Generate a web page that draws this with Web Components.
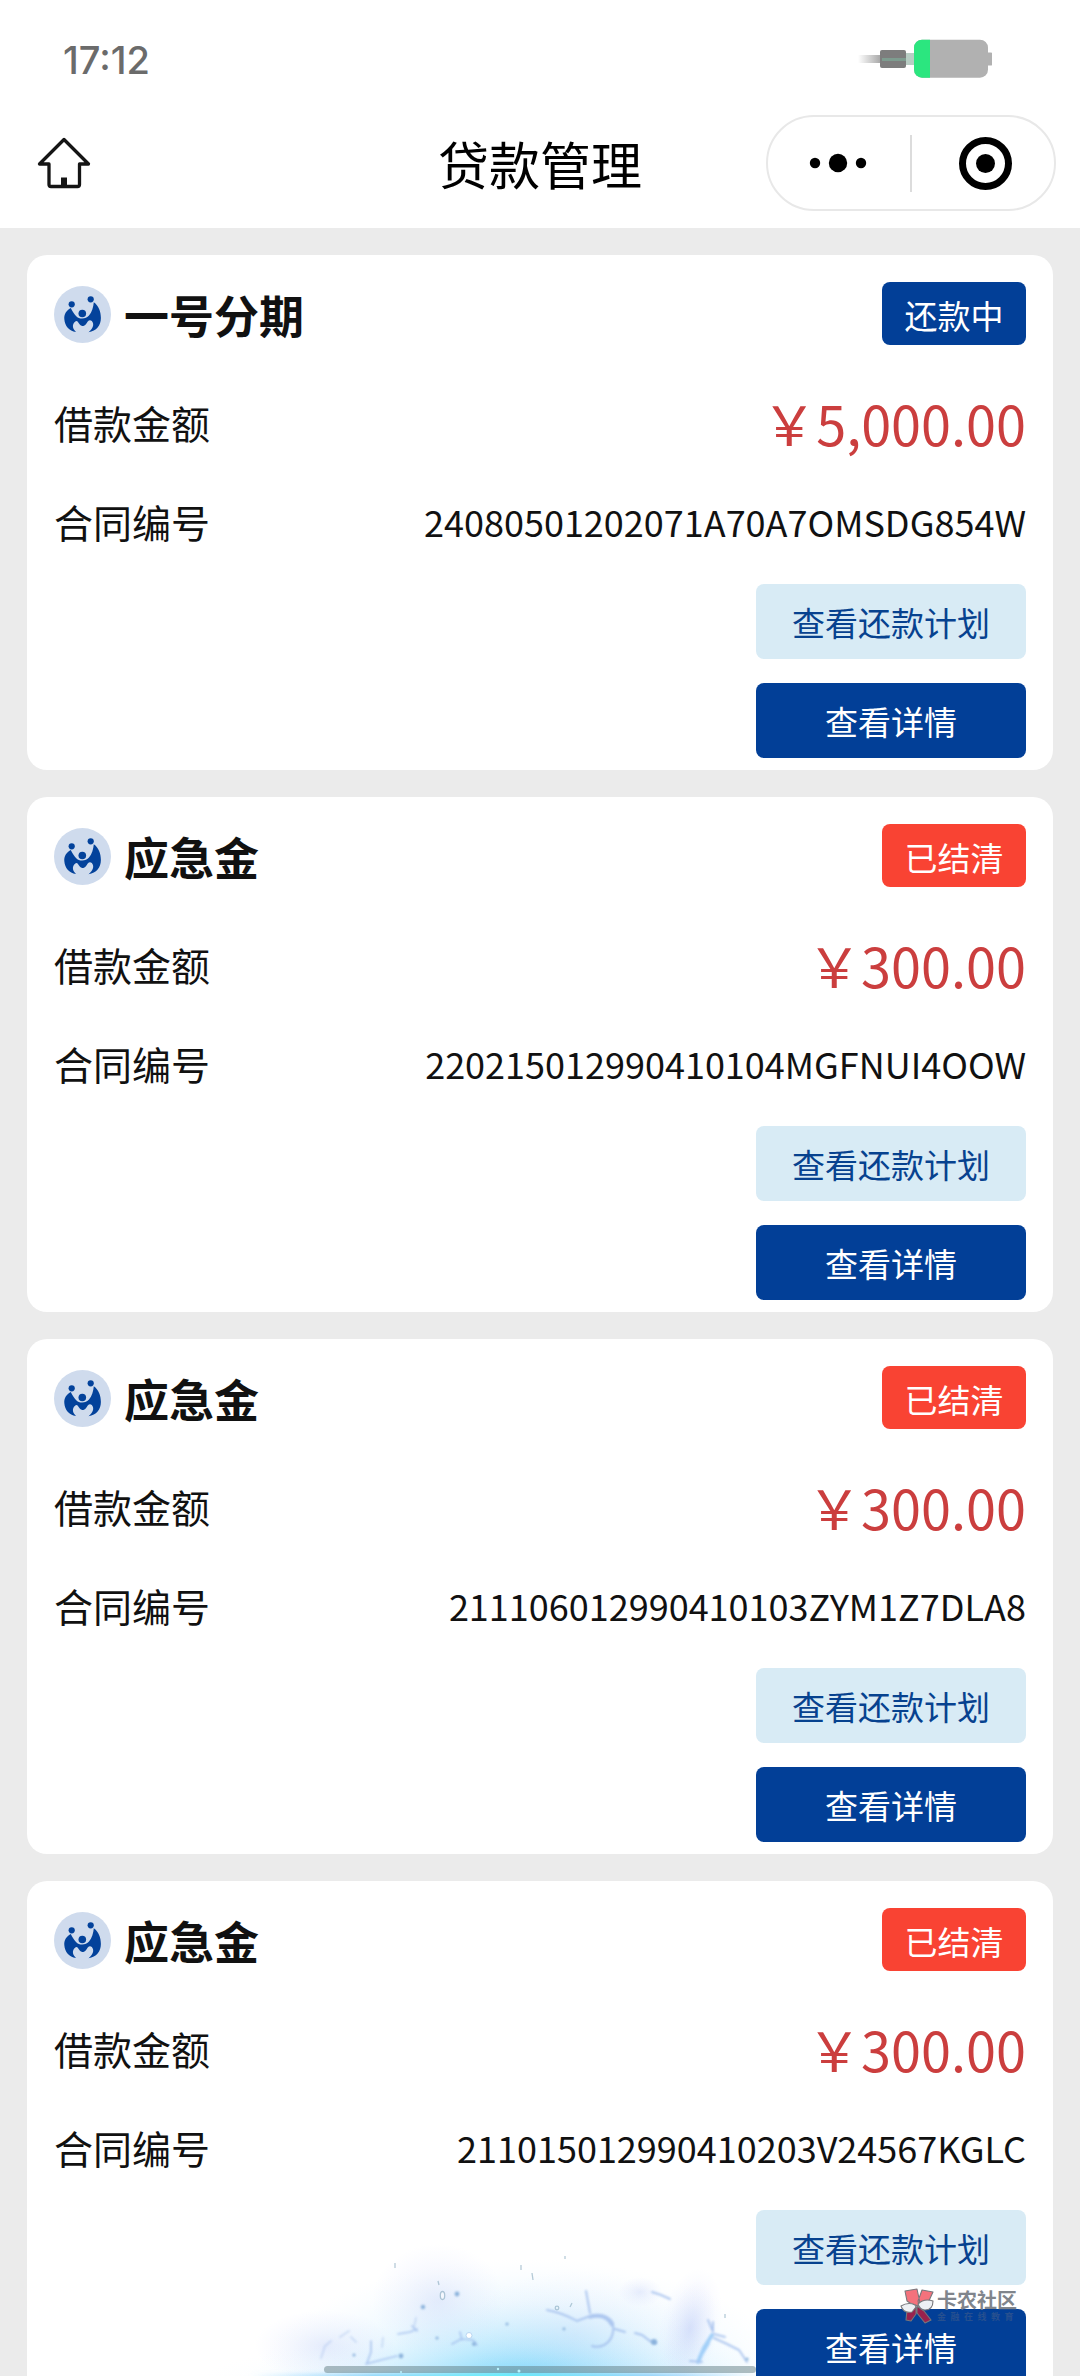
<!DOCTYPE html>
<html lang="zh-CN">
<head>
<meta charset="utf-8">
<title>贷款管理</title>
<style>
html,body{margin:0;padding:0}
body{width:1080px;height:2376px;overflow:hidden;background:#ebebeb;font-family:"Noto Sans CJK SC",sans-serif;color:#111}
</style>
</head>
<body>
<loan-app></loan-app>
<script>
const define=(name,html)=>customElements.define(name,class extends HTMLElement{
  constructor(){super();this.attachShadow({mode:'open'}).innerHTML=html;}
});

define('status-bar',`<style>
:host{display:flex;height:114px;align-items:center;justify-content:space-between;padding:4px 88px 0 63px;box-sizing:border-box;color:#6b6b6b}
span{font:450 38px/40px Inter,sans-serif;padding-top:2px}
svg{display:block}
</style><span>17:12</span>
<svg width="134" height="40" viewBox="858 38 134 40">
<defs><linearGradient id="w"><stop offset="0" stop-color="#aaa" stop-opacity="0"/><stop offset="1" stop-color="#aaa"/></linearGradient></defs>
<path fill="url(#w)" d="M858 54h22v8h-22z"/>
<path fill="#b8cdc4" d="M905 52h10v12h-10z"/>
<rect x="880" y="49" width="26" height="18" rx="2" fill="#7d7d7d"/><path fill="#7e9c8f" d="M882 57h24v3h-24z"/>
<rect x="985" y="51.500" width="8" height="13" rx="2.500" fill="#b1b1b1"/>
<rect x="914" y="38.700" width="74" height="38" rx="8" fill="#b1b1b1"/>
<path fill="#2be67f" d="M930 38.700v38h-8a8 8 0 0 1-8-8v-22a8 8 0 0 1 8-8z"/>
</svg>`);

define('capsule-menu',`<style>
:host{display:flex;box-sizing:border-box;width:290px;height:96px;border:2px solid #e8e8e8;border-radius:48px;background:#fff}
svg{display:block}
</style><svg width="286" height="92" viewBox="768 117 286 92">
<circle cx="815" cy="163" r="5.200"/><circle cx="838" cy="163" r="9.200"/><circle cx="861" cy="163" r="5.200"/>
<path d="M911 135v57" stroke="#dcdcdc" stroke-width="2"/>
<circle cx="985.500" cy="163.500" r="23" fill="none" stroke="#000" stroke-width="7"/><circle cx="985.500" cy="163.500" r="9.500"/>
</svg>`);

define('nav-bar',`<style>
:host{display:grid;grid-template-columns:1fr auto 1fr;align-items:center;height:114px;box-sizing:border-box;padding:0 24px 16px 36px}
h1{margin:0;font-size:51px;line-height:70px;font-weight:400;color:#000;transform:translateX(-6px)}
.home{display:block}
capsule-menu{justify-self:end}
</style><svg class="home" width="56" height="54" viewBox="36 136 56 54" fill="none" stroke="#151515" stroke-width="3.300" stroke-linejoin="round"><path d="M64 139.500 39.500 164H49v20.500q0 2 2 2H77.500q2 0 2-2V164H88.500z"/><path d="M61 177.500h6v8h-6z" fill="#151515" stroke="none"/></svg>
<h1>贷款管理</h1><capsule-menu></capsule-menu>`);

define('brand-mark',`<style>:host{display:block;width:57px;height:57px}svg{display:block}</style>
<svg width="57" height="57" viewBox="0 0 57 57"><circle cx="28.500" cy="28.500" r="28.500" fill="#cfdbed"/>
<g fill="#03429b"><circle cx="17.700" cy="18.300" r="3.100"/><circle cx="36.700" cy="13.300" r="3.100"/><circle cx="28.300" cy="27.500" r="3.800"/>
<path d="M16.800 22C12 24.500 10 28.500 10.300 33C10.800 40 15 45 22 46C18.200 42.500 18 38.500 21 35.800C22 34.800 23 34.800 23.800 35.800C25.300 37.800 26 40 28.500 40C31.300 40 32.300 37.500 34 35.200C35 33.800 36.800 33.900 37.800 35C40.500 38 39.300 42.500 34.500 46.200C42.500 45 46.800 39.500 46.900 32C46.900 25.500 44.500 19.500 39.800 16.200C39.300 21.500 38 26 35 29.500C32 33.200 25.500 33.800 22 30C20 27.800 18.200 25 16.800 22Z"/></g></svg>`);

define('status-tag',`<style>
:host{display:block;width:144px;height:63px;border-radius:8px;background:#f94333;color:#fff;font-size:33px;line-height:66px;text-align:center}
:host([kind=active]){background:#023f97}
</style><slot></slot>`);

define('action-button',`<style>
:host{display:block;width:270px;height:75px;border-radius:8px;background:#d8ebf5;color:#07428f;font-size:33px;line-height:76px;text-align:center}
:host([primary]){background:#023f97;color:#fff}
</style><slot></slot>`);

define('info-row',`<style>
:host{display:flex;justify-content:space-between;align-items:center;height:99px;font-size:39px;line-height:58px}
.v{font-size:36px;color:#111}
:host([money]) .v{font-size:54px;color:#cb3e3e;padding-top:2px}
</style><slot name="label"></slot><span class="v"><slot></slot></span>`);

customElements.define('loan-card',class extends HTMLElement{
  constructor(){
    super();
    const a=n=>this.getAttribute(n);
    this.attachShadow({mode:'open'}).innerHTML=`<style>
:host{display:flex;flex-direction:column;flex:none;box-sizing:border-box;height:515px;background:#fff;border-radius:20px;padding:27px 27px 12px 27px}
header{display:flex;align-items:center;height:63px;margin-bottom:27px}
brand-mark{margin-top:2px}
h2{margin:2px auto 0 13px;font-size:45px;line-height:60px;font-weight:700;color:#111}
.rows{height:212px}
.actions{display:flex;flex-direction:column;align-items:flex-end;gap:24px}
</style><header><brand-mark></brand-mark><h2>${a('name')}</h2><status-tag ${a('kind')?'kind="'+a('kind')+'"':''}>${a('status')}</status-tag></header>
<div class="rows"><info-row money><span slot="label">借款金额</span>${a('amount')}</info-row>
<info-row><span slot="label">合同编号</span>${a('contract')}</info-row></div>
<div class="actions"><action-button>查看还款计划</action-button><action-button primary>查看详情</action-button></div>`;
  }
});

define('charge-glow',`<style>:host{display:block;width:1080px;height:240px}svg{display:block}</style>
<svg width="1080" height="240" viewBox="0 2136 1080 240">
<defs>
<radialGradient id="a"><stop offset="0" stop-color="#4accf8" stop-opacity=".75"/><stop offset=".3" stop-color="#74d4fb" stop-opacity=".48"/><stop offset=".65" stop-color="#a9e0fd" stop-opacity=".2"/><stop offset="1" stop-color="#d9efff" stop-opacity="0"/></radialGradient>
<radialGradient id="b"><stop offset="0" stop-color="#b3c2f5" stop-opacity=".28"/><stop offset=".5" stop-color="#bccaf8" stop-opacity=".13"/><stop offset="1" stop-color="#c4cbff" stop-opacity="0"/></radialGradient>
<linearGradient id="c"><stop offset="0" stop-color="#86cfff" stop-opacity="0"/><stop offset=".25" stop-color="#7fd2fa"/><stop offset=".5" stop-color="#5cf5fa"/><stop offset=".8" stop-color="#8acdf9"/><stop offset="1" stop-color="#86cfff" stop-opacity="0"/></linearGradient>
<filter id="s" x="-30%" y="-30%" width="160%" height="160%"><feGaussianBlur stdDeviation=".9"/></filter>
<filter id="t" x="-30%" y="-200%" width="160%" height="500%"><feGaussianBlur stdDeviation="2"/></filter>
<clipPath id="k"><path d="M0 2136H756V2376H0z"/></clipPath>
</defs>
<g clip-path="url(#k)">
<ellipse cx="525" cy="2384" rx="270" ry="125" fill="url(#a)"/>
<ellipse cx="525" cy="2384" rx="330" ry="50" fill="url(#a)" opacity=".4"/>
<ellipse cx="438" cy="2300" rx="66" ry="56" fill="url(#b)"/>
<ellipse cx="325" cy="2346" rx="70" ry="36" fill="url(#b)"/>
<ellipse cx="690" cy="2327" rx="30" ry="60" transform="rotate(12 690 2327)" fill="url(#b)"/>
<ellipse cx="690" cy="2330" rx="24" ry="50" transform="rotate(12 690 2330)" fill="url(#b)"/>
<ellipse cx="575" cy="2335" rx="110" ry="65" fill="url(#b)" opacity=".6"/>
<ellipse cx="640" cy="2292" rx="22" ry="15" fill="url(#b)"/>
<path d="M250 2374h500v5H250z" fill="url(#c)" filter="url(#t)"/>
<g fill="none" stroke="#9fbcec" stroke-width="2" stroke-linecap="round" filter="url(#s)" opacity=".8">
<path d="M547 2310q16 3 30 11l16-6M586 2291l4 22M593 2315q14-2 20 8q2 16-9 22q-6 3-12 1"/>
<path d="M590 2317q16-4 22 8" stroke-width="3.500"/>
<path d="M615 2329l10 3M635 2333l7 2 8 6 6 2M652 2292l9 3 9 4"/>
<path d="M712 2335l-8 13-6 14M708 2343l-6 10" stroke-width="4" stroke="#8fc6f7"/>
<path d="M708 2320l5 12 0-10M714 2334l11 3M714 2338l13 6 12 6 8 12M690 2361l12 1"/>
<path d="M452 2344l9-5 12 1 4 5M460 2332l2 8M398 2334l12-2 7-3M412 2326l5 5M366 2364l15-4 16-4M371 2341l0 11-4 11" stroke-width="1.700"/>
<path d="M321 2358l4-12 6-5M340 2337l9-6M351 2337l5 5M383 2338l-1 9M416 2318l-2 9" opacity=".5"/>
</g>
<g fill="none" stroke="#86a9bd" stroke-width="1.300" opacity=".6"><path d="M395 2263v5M521 2265v5M565 2256v3M532 2273l1 7M438 2281l1 4M725 2314v4M572 2303l-2 4"/><circle cx="557" cy="2308" r="1.800"/><ellipse cx="442.500" cy="2295.500" rx="2.200" ry="4" fill="#fff"/></g>
<g fill="#8ab2dc" filter="url(#s)"><circle cx="457" cy="2294" r="2.400"/><circle cx="423" cy="2307" r="2.200"/><circle cx="437" cy="2338" r="1.500"/><circle cx="507" cy="2324" r="1.500"/><circle cx="564" cy="2329" r="1.400"/><circle cx="354" cy="2355" r="1.500"/><circle cx="401" cy="2356" r="2.400"/><circle cx="474" cy="2344" r="2"/><circle cx="654" cy="2342" r="3"/><circle cx="747" cy="2359" r="1.600"/></g>
<circle cx="469" cy="2335.500" r="3" fill="#fff" stroke="#b9d6f2" stroke-width="1"/>
<rect x="324" y="2366" width="432" height="7" rx="3.500" fill="#647e84" fill-opacity=".5"/>
<g fill="#b9f5ff"><circle cx="498" cy="2369" r="1.200"/><circle cx="519" cy="2371" r="1.500"/><circle cx="401" cy="2372" r="1"/></g>
</g>
</svg>`);

define('community-mark',`<style>
:host{display:flex;align-items:flex-start;gap:3px;width:120px}
svg{flex:none}
div{display:flex;flex-direction:column}
b{font-size:20px;line-height:23px;font-weight:700;color:#80858c;white-space:nowrap}
small{font-size:9px;line-height:11px;font-weight:700;color:#27508f;letter-spacing:4.500px;white-space:nowrap}
</style><svg width="34" height="36" viewBox="0 0 34 36"><g stroke="#77777c" stroke-width="1.100" stroke-linejoin="round">
<path d="M5 3 17 1l3 14-2 3-8-3-3-2zM22 2l11 2-6 13-8 1-1-5z" fill="#f4727c"/>
<path d="M7 22l9-3 0 7-5 7-5-1zM17 18l7 5 7 9-6 3-8-10z" fill="#98214d"/>
<path d="M1 18c5-3 10-3 14-1l1 2-4 5c-5 1-9 0-11-6zM18 16c4-4 9-5 15-3 0 6-3 9-8 9-4 0-6-3-7-6z" fill="#edf0f4"/></g></svg>
<div><b>卡农社区</b><small>金融在线教育</small></div>`);

define('loan-app',`<style>
:host{display:grid;width:1080px;height:2376px;overflow:hidden}
.page,.over{grid-area:1/1;min-width:0}
.page{display:flex;flex-direction:column;height:2376px;overflow:hidden}
.top{flex:none;height:228px;background:#fff}
main{display:flex;flex-direction:column;gap:27px;padding:27px 27px 0}
.over{position:relative;pointer-events:none;height:2376px}
charge-glow{position:absolute;left:0;bottom:0}
community-mark{position:absolute;left:900px;top:2288px}
</style>
<div class="page"><div class="top"><status-bar></status-bar><nav-bar></nav-bar></div>
<main>
<loan-card name="一号分期" kind="active" status="还款中" amount="￥5,000.00" contract="24080501202071A70A7OMSDG854W"></loan-card>
<loan-card name="应急金" status="已结清" amount="￥300.00" contract="220215012990410104MGFNUI4OOW"></loan-card>
<loan-card name="应急金" status="已结清" amount="￥300.00" contract="211106012990410103ZYM1Z7DLA8"></loan-card>
<loan-card name="应急金" status="已结清" amount="￥300.00" contract="211015012990410203V24567KGLC"></loan-card>
</main></div>
<div class="over"><charge-glow></charge-glow><community-mark></community-mark></div>`);
</script>
</body>
</html>
